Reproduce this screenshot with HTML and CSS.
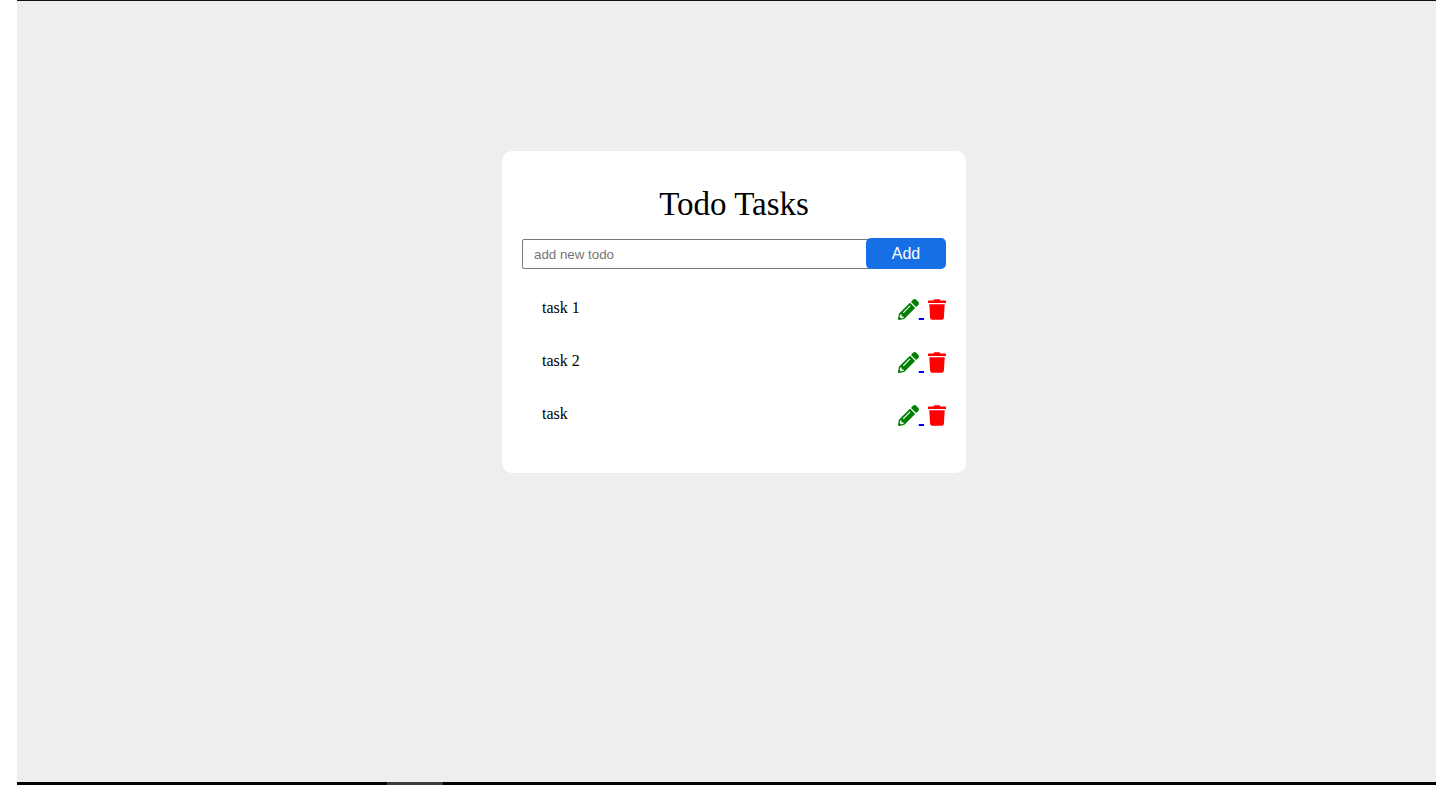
FILE: index.html
```html
<!DOCTYPE html>
<html lang="en">
<head>
<meta charset="utf-8">
<meta name="viewport" content="width=device-width, initial-scale=1">
<title>Todo Tasks</title>
<link rel="stylesheet" href="styles.css">
</head>
<body>
<svg class="sprite" aria-hidden="true">
  <symbol id="pencil" viewBox="0 0 512 512"><path d="M497.9 142.1l-46.1 46.1c-4.7 4.7-12.3 4.7-17 0l-111-111c-4.7-4.7-4.7-12.3 0-17l46.1-46.1c18.7-18.7 49.1-18.7 67.9 0l60.1 60.1c18.8 18.7 18.8 49.1 0 67.900zM284.2 99.800L21.600 362.400.4 483.900c-2.900 16.400 11.400 30.600 27.800 27.800l121.500-21.300 262.600-262.600c4.700-4.700 4.700-12.300 0-17l-111-111c-4.800-4.700-12.400-4.700-17.100 0zM124.100 339.900c-5.500-5.500-5.500-14.300 0-19.800l154-154c5.500-5.500 14.300-5.500 19.800 0s5.500 14.300 0 19.800l-154 154c-5.500 5.500-14.300 5.500-19.800 0zM88 424h48v36.300l-64.500 11.300-31.100-31.100L51.700 376H88v48z"/></symbol>
  <symbol id="trash" viewBox="0 0 448 512"><path d="M432 32H312l-9.4-18.700A24 24 0 0 0 281.100 0H166.800a23.700 23.700 0 0 0-21.400 13.300L136 32H16A16 16 0 0 0 0 48v32a16 16 0 0 0 16 16h416a16 16 0 0 0 16-16V48a16 16 0 0 0-16-16zM53.200 467a48 48 0 0 0 47.900 45h245.800a48 48 0 0 0 47.900-45L416 128H32z"/></symbol>
</svg>
<div class="frame">
  <main class="page">
    <section class="card">
      <h1 class="title">Todo Tasks</h1>
      <form class="add-form">
        <input class="add-input" type="text" placeholder="add new todo" aria-label="New todo">
        <button class="add-button" type="button">Add</button>
      </form>
      <ul class="tasks">
        <li class="task">
          <span>task 1</span>
          <span class="actions"><a class="edit" href="#" aria-label="Edit task 1"><svg class="icon pencil"><use href="#pencil"/></svg> </a><a class="delete" href="#" aria-label="Delete task 1"><svg class="icon trash"><use href="#trash"/></svg></a></span>
        </li>
        <li class="task">
          <span>task 2</span>
          <span class="actions"><a class="edit" href="#" aria-label="Edit task 2"><svg class="icon pencil"><use href="#pencil"/></svg> </a><a class="delete" href="#" aria-label="Delete task 2"><svg class="icon trash"><use href="#trash"/></svg></a></span>
        </li>
        <li class="task">
          <span>task</span>
          <span class="actions"><a class="edit" href="#" aria-label="Edit task"><svg class="icon pencil"><use href="#pencil"/></svg> </a><a class="delete" href="#" aria-label="Delete task"><svg class="icon trash"><use href="#trash"/></svg></a></span>
        </li>
      </ul>
    </section>
  </main>
  <div class="bottom-bar"><div class="bar-segment"></div></div>
</div>
</body>
</html>
```

FILE: styles.css
```css
* {
  box-sizing: border-box;
}

body {
  margin: 0;
  background: #fff;
  color: #000;
  font-family: "Liberation Serif", serif;
  font-size: 16px;
}

.sprite {
  display: none;
}

.frame {
  display: flex;
  flex-direction: column;
  min-height: 100vh;
  margin-left: 17px;
  border-top: 1px solid #111;
  background: #eee;
}

.page {
  flex: 1;
  padding: 150px 0 20px 15px;
}

.card {
  width: 100%;
  max-width: 464px;
  margin: 0 auto;
  padding: 34px 20px 33px;
  border-radius: 10px;
  background: #fff;
}

.title {
  margin: 0 0 15px;
  font-size: 33px;
  font-weight: 400;
  line-height: 38px;
  text-align: center;
}

.add-form {
  display: flex;
  align-items: flex-end;
}

.add-input {
  flex: 1;
  min-width: 0;
  height: 30px;
  margin-right: -5px;
  padding: 0 11px;
  border: 1px solid #767676;
  border-radius: 2px;
  background: #fff;
  font-family: "Liberation Sans", sans-serif;
}

.add-input::placeholder {
  color: #757575;
}

.add-button {
  z-index: 1;
  width: 80px;
  height: 31px;
  padding: 0;
  border: 0;
  border-radius: 5px;
  background: #176fe6;
  color: #fff;
  font-family: "Liberation Sans", sans-serif;
  font-size: 16px;
}

.tasks {
  margin: 12px 0 0;
  padding: 0 0 0 20px;
  list-style: none;
}

.task {
  display: flex;
  align-items: center;
  justify-content: space-between;
  height: 53px;
}

.actions {
  padding-top: 2px;
  font-size: 21px;
  line-height: 24px;
}

.edit {
  color: #00e;
}

.delete {
  margin-left: 4px;
}

.icon {
  height: 21px;
  vertical-align: -4px;
}

.pencil {
  width: 21px;
  fill: #008000;
}

.trash {
  width: 18px;
  fill: #f00;
}

.bottom-bar {
  height: 3px;
  padding-left: 370px;
  background: #000;
}

.bar-segment {
  width: 56px;
  height: 3px;
  background: #3c3c3c;
}
```
